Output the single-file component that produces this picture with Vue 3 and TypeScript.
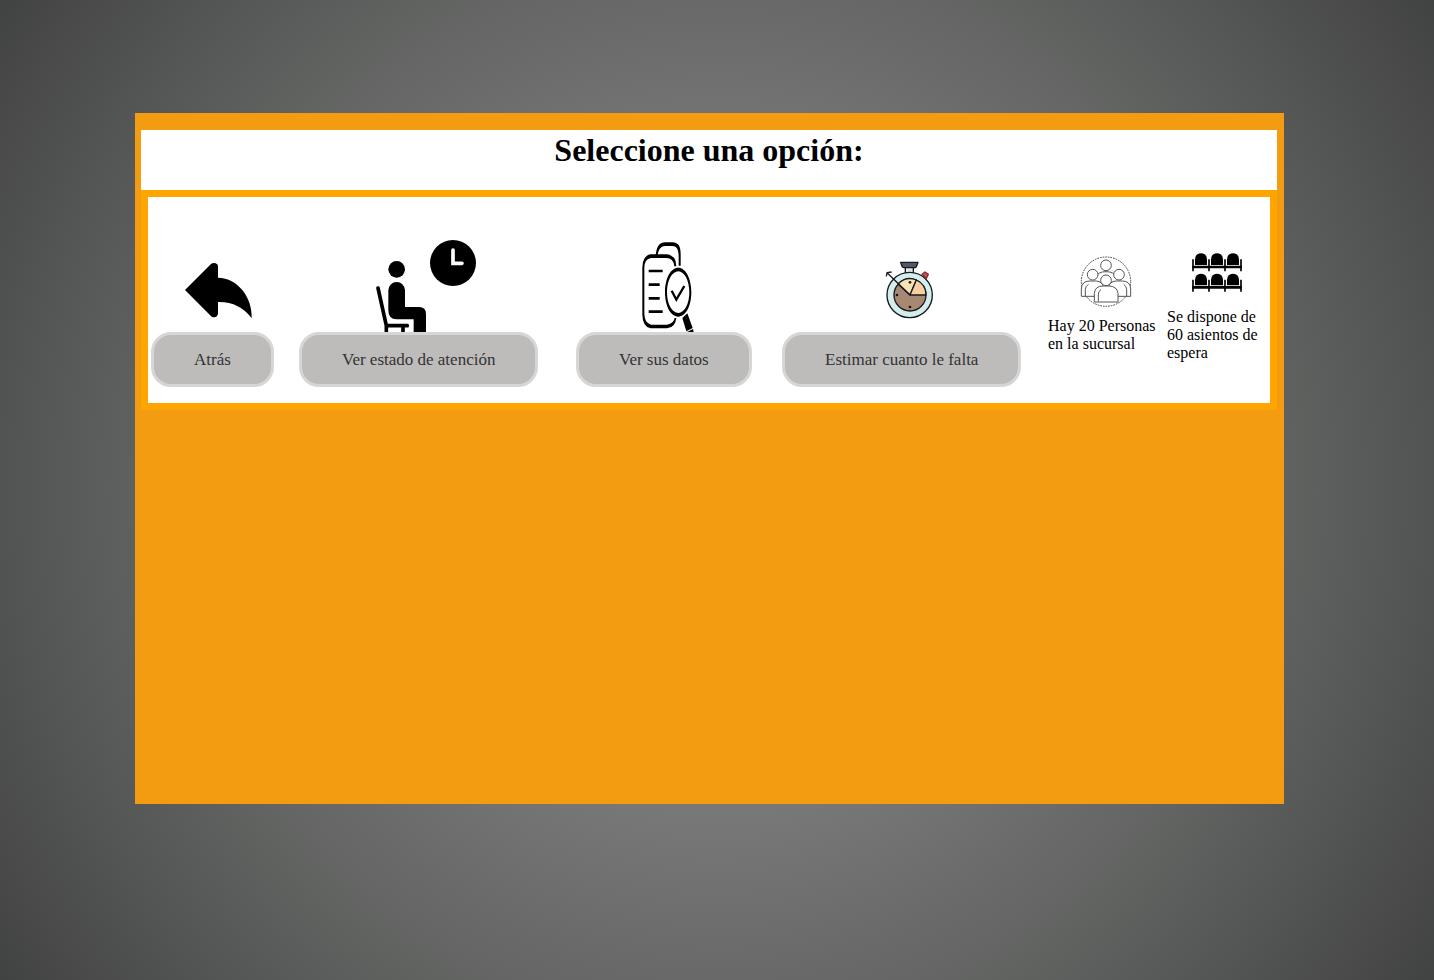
<script setup lang="ts">
const people = 20
const seats = 60
const seatColumns = [0, 48, 96]
const seatRows = [0, 61]
</script>

<template>
  <main class="page">
    <section class="panel">
      <header class="heading">
        <h1>Seleccione una opción:</h1>
      </header>
      <div class="options">
        <div class="option">
          <svg class="picture" viewBox="21 30 360 276" aria-hidden="true">
            <path d="M120 180 L198 102 Q207 95 217 103 L219 108 V143 C278 144 323 202 320 265 C296 232 262 215 219 216 V251 Q215 266 200 260 Z" />
          </svg>
          <button type="button">Atrás</button>
        </div>

        <div class="option">
          <svg class="picture" viewBox="24 29 360 276" aria-hidden="true">
            <circle cx="306" cy="98" r="69" />
            <path d="M306 59 V99 H333" fill="none" stroke="#fff" stroke-width="11" stroke-linecap="round" />
            <circle cx="137" cy="117" r="25" />
            <path d="M112 180 A25 25 0 0 1 162 180 V230 H204 Q225 230 225 251 V310 H188 V267 H137 Q112 267 112 240 Z" />
            <path d="M81 173 L106 286 V310 M106 286 H169 M156 288 V310" fill="none" stroke="#000" stroke-width="11" stroke-linecap="round" stroke-linejoin="round" />
          </svg>
          <button type="button">Ver estado de atención</button>
        </div>

        <div class="option">
          <svg class="picture" viewBox="100 30 360 276" aria-hidden="true">
            <path d="M255 76 C258 52 264 37 284 37 H305 C325 38 330 51 330 72 V107 H324 V76 C323 57 317 48 305 48 H284 C269 49 263 60 261 76 Z" />
            <path fill-rule="evenodd" d="M240 73 H288 Q317 76 317 109 H311 Q308 84 287 84 H241 Q221 88 221 113 V252 Q222 280 241 284 H289 Q310 280 312 264 H317 Q314 293 289 295 H240 Q216 291 215 254 V112 Q216 77 240 73 Z" />
            <path d="M234 123 H276 M234 164 H267 M234 205 H267 M234 245 H276" fill="none" stroke="#000" stroke-width="8" />
            <path fill-rule="evenodd" d="M323 113 C345 113 362 145 362 187 C362 229 345 260 323 260 C300 260 283 229 283 187 C283 145 300 113 323 113 Z M323 124 C304 124 289 152 289 187 C289 222 304 249 323 249 C341 249 356 222 356 187 C356 152 341 124 323 124 Z" />
            <path d="M303 182 L317 209 L341 168" fill="none" stroke="#000" stroke-width="7" />
            <path d="M335 264 L350 250 L366 294 L347 304 Z M349 306 L367 297 L369 306 Z" />
          </svg>
          <button type="button">Ver sus datos</button>
        </div>

        <div class="option">
          <svg class="picture" viewBox="-55 0 360 276" aria-hidden="true">
            <g stroke="#151b20" stroke-width="4" stroke-linejoin="round">
              <path d="M135 80 H159 V100 H135 Z" fill="#e2e7e7" />
              <path d="M121 67 H173 L168 80 Q167 83 163 83 H130 Q126 82 125 79 Z" fill="#555765" />
              <circle cx="148" cy="165" r="68" fill="#d6eeeb" />
              <path d="M185 103 L194 96 L204 103 L198 115 Z" fill="#d34d55" stroke="#823036" />
              <circle cx="149" cy="165" r="48" fill="#a98873" />
              <path d="M149 165 L113 132 Q137 107 168 120 Z" fill="#f8e2b5" />
              <path d="M149 165 L168 120 Q197 133 197 165 Z" fill="#fbcfa2" />
              <path d="M149 165 L81 99 M78 109 L80 98 L94 96" fill="none" />
            </g>
            <g fill="#171717">
              <circle cx="149" cy="127" r="4" />
              <circle cx="110" cy="165" r="4" />
              <circle cx="149" cy="201" r="4" />
            </g>
          </svg>
          <button type="button">Estimar cuanto le falta</button>
        </div>

        <div class="info people">
          <svg viewBox="120 34 156 156" aria-hidden="true">
            <circle cx="198" cy="111" r="74" fill="none" stroke="#444" stroke-width="3" stroke-dasharray="5 3" />
            <g fill="#fff" stroke="#555" stroke-width="3">
              <circle cx="198" cy="62" r="16" />
              <path d="M169 96 Q174 81 198 81 Q222 81 227 96" fill="none" />
              <path d="M124 155 V133 Q125 109 149 109 H169 Q187 111 190 127 V155 Z" />
              <path d="M272 155 V133 Q271 109 247 109 H227 Q209 111 206 127 V155 Z" />
              <circle cx="158" cy="90" r="16" />
              <circle cx="237" cy="90" r="16" />
              <path d="M163 172 V146 Q165 124 189 124 H208 Q231 125 234 146 V172 Z" />
              <circle cx="198" cy="107" r="16" />
              <path d="M136 155 V134 Q137 124 145 119 M260 155 V134 Q259 124 251 119 M175 170 V148 Q176 139 183 135" fill="none" />
            </g>
          </svg>
          <p>Hay {{ people }} Personas en la sucursal</p>
        </div>

        <div class="info seats">
          <svg viewBox="93 22 156 120" aria-hidden="true">
            <g v-for="y in seatRows" :key="y" :transform="`translate(0 ${y})`">
              <path v-for="x in seatColumns" :key="x" :transform="`translate(${x} 0)`" d="M105 61 V45 Q106 26 123 26 Q140 26 141 45 V61 Z" />
              <path d="M97 67 H245" fill="none" stroke="#000" stroke-width="8" />
              <path d="M99 44 V80 M147 44 V80 M195 44 V80 M243 44 V80" fill="none" stroke="#000" stroke-width="5" />
            </g>
          </svg>
          <p>Se dispone de {{ seats }} asientos de espera</p>
        </div>
      </div>
    </section>
  </main>
</template>

<style>
body {
  margin: 0;
}
</style>

<style scoped>
.page {
  box-sizing: border-box;
  display: flex;
  min-height: 100vh;
  padding: 113px 150px 176px 135px;
  background: radial-gradient(circle at center, #878787 0%, #787878 37%, #696969 56%, #616361 65%, #525554 81%, #4a4b4a 91%, #414342 100%);
  font-family: "Liberation Serif", "Times New Roman", serif;
  font-size: 16px;
  line-height: 18px;
  color: #000;
}

.panel {
  flex: 1;
  min-width: 0;
  padding: 17px 7px 0 6px;
  background: #f39c12;
}

.heading {
  padding: 2px 0 22px;
  background: #fff;
  text-align: center;
}

h1 {
  margin: 0;
  font-size: 32px;
  line-height: 36px;
}

.options {
  display: grid;
  grid-template-columns: 148fr 277fr 206fr 266fr 119fr 100fr;
  padding: 43px 3px 16px;
  border: 7px solid #ffa500;
  background: #fff;
}

.option {
  display: flex;
  flex-direction: column;
  align-items: center;
  justify-self: start;
}

.picture {
  display: block;
  width: 120px;
  height: 92px;
}

button {
  height: 55px;
  padding: 0 40px;
  border: 3px solid #d6d6d6;
  border-radius: 20px;
  background: #bdbcbb;
  color: #333;
  font: inherit;
  font-size: 17px;
  white-space: nowrap;
  cursor: pointer;
}

.info svg {
  display: block;
  width: 52px;
}

.info p {
  margin: 0;
}

.people {
  padding-top: 16px;
}

.people svg {
  height: 52px;
  margin: 0 0 9px 32px;
}

.seats {
  padding-top: 12px;
}

.seats svg {
  height: 40px;
  margin: 0 0 16px 24px;
}
</style>
